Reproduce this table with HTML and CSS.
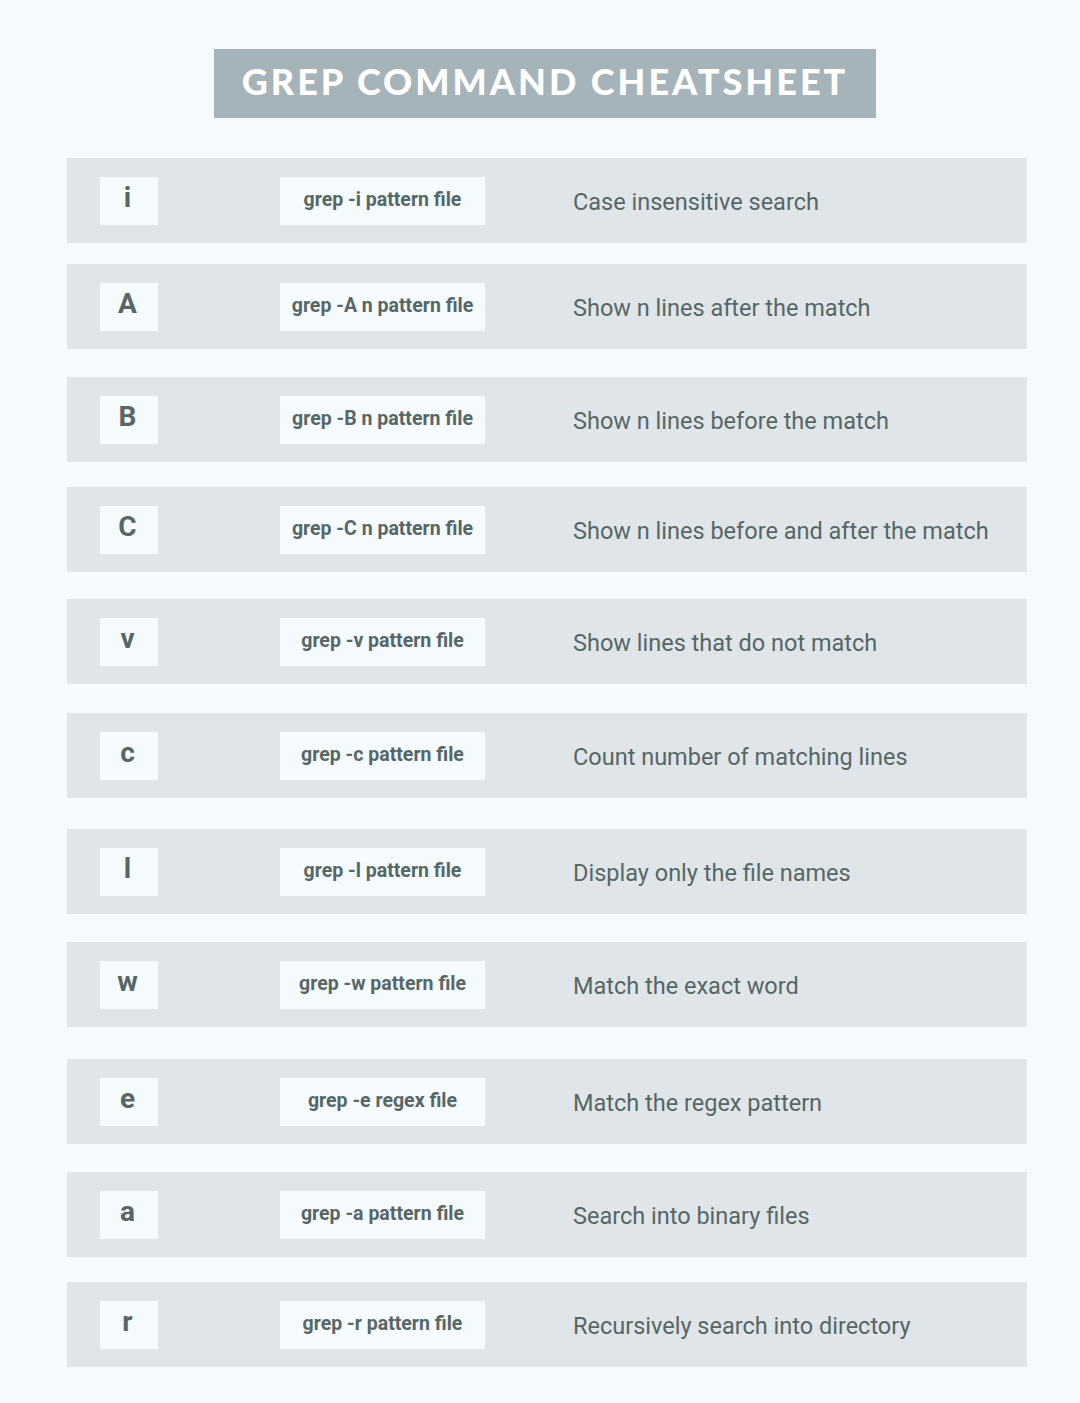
FILE: index.html
```html
<!DOCTYPE html>
<html>
<head>
<meta charset="utf-8">
<link rel="stylesheet" href="styles.css">
</head>
<body>
<div class="page">
  <h1 class="title">GREP COMMAND CHEATSHEET</h1>
  <div class="rows">
    <div class="row"><div class="key">i</div><div class="cmd">grep -i pattern file</div><div class="desc">Case insensitive search</div></div>
    <div class="row"><div class="key">A</div><div class="cmd">grep -A n pattern file</div><div class="desc">Show n lines after the match</div></div>
    <div class="row"><div class="key">B</div><div class="cmd">grep -B n pattern file</div><div class="desc">Show n lines before the match</div></div>
    <div class="row"><div class="key">C</div><div class="cmd">grep -C n pattern file</div><div class="desc">Show n lines before and after the match</div></div>
    <div class="row"><div class="key">v</div><div class="cmd">grep -v pattern file</div><div class="desc">Show lines that do not match</div></div>
    <div class="row"><div class="key">c</div><div class="cmd">grep -c pattern file</div><div class="desc">Count number of matching lines</div></div>
    <div class="row"><div class="key">l</div><div class="cmd">grep -l pattern file</div><div class="desc">Display only the file names</div></div>
    <div class="row"><div class="key">w</div><div class="cmd">grep -w pattern file</div><div class="desc">Match the exact word</div></div>
    <div class="row"><div class="key">e</div><div class="cmd">grep -e regex file</div><div class="desc">Match the regex pattern</div></div>
    <div class="row"><div class="key">a</div><div class="cmd">grep -a pattern file</div><div class="desc">Search into binary files</div></div>
    <div class="row"><div class="key">r</div><div class="cmd">grep -r pattern file</div><div class="desc">Recursively search into directory</div></div>
  </div>
</div>
</body>
</html>
```
FILE: styles.css
```css
html, body {
  margin: 0;
  padding: 0;
  background: #f5fafd;
}
body {
  width: 1080px;
  height: 1403px;
  overflow: hidden;
  font-family: Roboto, "Liberation Sans", sans-serif;
  color: #566766;
}
.page {
  display: flex;
  flex-direction: column;
  align-items: center;
  padding-top: 49px;
}
.title {
  margin: 0 0 0 10px;
  width: 662px;
  height: 69px;
  box-sizing: border-box;
  background: #a5b3ba;
  color: #ffffff;
  font-family: Lato, "Liberation Sans", sans-serif;
  font-weight: 900;
  font-size: 36px;
  letter-spacing: 3px;
  display: flex;
  align-items: center;
  justify-content: center;
  padding-bottom: 6px;
}
.rows {
  margin-top: 40px;
  width: 960px;
  display: flex;
  flex-direction: column;
  margin-left: 14px;
}
.row {
  height: 85px;
  background: #dfe5e8;
  display: flex;
  align-items: center;
  padding-left: 33px;
  margin-top: 28px;
}
.row:nth-child(1) { margin-top: 0; }
.row:nth-child(2) { margin-top: 21px; }
.row:nth-child(3) { margin-top: 28px; }
.row:nth-child(4) { margin-top: 25px; }
.row:nth-child(5) { margin-top: 27px; }
.row:nth-child(6) { margin-top: 29px; }
.row:nth-child(7) { margin-top: 31px; }
.row:nth-child(8) { margin-top: 28px; }
.row:nth-child(9) { margin-top: 32px; }
.row:nth-child(10) { margin-top: 28px; }
.row:nth-child(11) { margin-top: 25px; }
.key {
  width: 58px;
  height: 48px;
  background: #f5fafd;
  font-weight: 700;
  font-size: 28px;
  display: flex;
  align-items: center;
  justify-content: center;
  padding-bottom: 6px;
  padding-right: 3px;
  box-sizing: border-box;
}
.cmd {
  margin-left: 122px;
  width: 205px;
  height: 48px;
  background: #f5fafd;
  font-weight: 700;
  font-size: 19.5px;
  display: flex;
  align-items: center;
  justify-content: center;
  padding-bottom: 2px;
  box-sizing: border-box;
  white-space: nowrap;
}
.desc {
  margin-left: 88px;
  font-size: 23.5px;
  padding-top: 2px;
  white-space: nowrap;
}
```
